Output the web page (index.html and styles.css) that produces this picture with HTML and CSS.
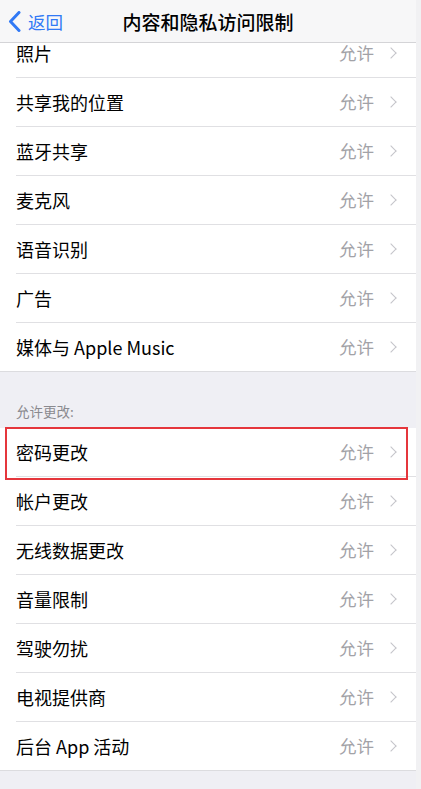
FILE: index.html
```html
<!DOCTYPE html>
<html lang="zh-CN">
<head>
<meta charset="utf-8">
<title>内容和隐私访问限制</title>
<link rel="stylesheet" href="styles.css">
</head>
<body>
<div class="app">
  <header class="topbar">
    <a class="back" href="#">
      <svg class="back-icon" width="13" height="21" viewBox="0 0 13 21" aria-hidden="true">
        <path d="M11 1.5 L2.5 10.5 L11 19.5" fill="none" stroke="currentColor" stroke-width="3" stroke-linecap="round" stroke-linejoin="round"/>
      </svg>
      <span>返回</span>
    </a>
    <h1 class="title">内容和隐私访问限制</h1>
  </header>

  <main class="page">
    <ul class="group">
      <li class="row"><span class="label">照片</span><span class="value">允许</span><i class="chev"></i></li>
      <li class="row"><span class="label">共享我的位置</span><span class="value">允许</span><i class="chev"></i></li>
      <li class="row"><span class="label">蓝牙共享</span><span class="value">允许</span><i class="chev"></i></li>
      <li class="row"><span class="label">麦克风</span><span class="value">允许</span><i class="chev"></i></li>
      <li class="row"><span class="label">语音识别</span><span class="value">允许</span><i class="chev"></i></li>
      <li class="row"><span class="label">广告</span><span class="value">允许</span><i class="chev"></i></li>
      <li class="row"><span class="label">媒体与 Apple Music</span><span class="value">允许</span><i class="chev"></i></li>
    </ul>

    <h2 class="section-title">允许更改:</h2>
    <ul class="group">
      <li class="row row-marked"><span class="label">密码更改</span><span class="value">允许</span><i class="chev"></i></li>
      <li class="row"><span class="label">帐户更改</span><span class="value">允许</span><i class="chev"></i></li>
      <li class="row"><span class="label">无线数据更改</span><span class="value">允许</span><i class="chev"></i></li>
      <li class="row"><span class="label">音量限制</span><span class="value">允许</span><i class="chev"></i></li>
      <li class="row"><span class="label">驾驶勿扰</span><span class="value">允许</span><i class="chev"></i></li>
      <li class="row"><span class="label">电视提供商</span><span class="value">允许</span><i class="chev"></i></li>
      <li class="row"><span class="label">后台 App 活动</span><span class="value">允许</span><i class="chev"></i></li>
    </ul>
  </main>
</div>
</body>
</html>
```

FILE: styles.css
```css
* {
  box-sizing: border-box;
}

html,
body {
  margin: 0;
  padding: 0;
  height: 100%;
}

body {
  background: #f1f1f3;
  font-family: "Noto Sans CJK SC", "Noto Sans", "Liberation Sans", sans-serif;
  color: #000;
  overflow: hidden;
}

.app {
  width: 416px;
  height: 789px;
  position: relative;
  background: #efeff4;
  overflow: hidden;
}

/* navigation bar floats over the scrolled list */
.topbar {
  position: absolute;
  top: 0;
  left: 0;
  right: 0;
  height: 43px;
  z-index: 2;
  background: #f7f7f8;
  border-bottom: 1px solid #d4d4d7;
  display: flex;
  align-items: center;
  justify-content: center;
}

.back {
  position: absolute;
  left: 8px;
  top: 0;
  height: 42px;
  display: flex;
  align-items: center;
  gap: 7px;
  color: #3179f5;
  text-decoration: none;
  font-size: 17.5px;
}

.back-icon {
  display: block;
}

.title {
  margin: 0;
  font-size: 19px;
  font-weight: 500;
  letter-spacing: 0;
}

/* list content, scrolled so the first row sits under the bar */
.page {
  padding-top: 29px;
}

.group {
  list-style: none;
  margin: 0;
  padding: 0;
  background: #fff;
  border-bottom: 1px solid #dcdcdf;
}

.row {
  position: relative;
  height: 49px;
  margin-left: 16px;
  padding-right: 19px;
  display: flex;
  align-items: center;
  border-bottom: 1px solid #e0e0e3;
}

.row:last-child {
  border-bottom: none;
  height: 48px;
}

.label {
  flex: 1;
  font-size: 18px;
  line-height: 1;
}

.value {
  font-size: 17.5px;
  color: #a2a2a7;
  line-height: 1;
  margin-right: 13px;
}

.chev {
  width: 8px;
  height: 8px;
  border-top: 1.8px solid #c4c4c9;
  border-right: 1.8px solid #c4c4c9;
  transform: rotate(45deg);
  margin-right: 2px;
}

.section-title {
  margin: 0;
  height: 56px;
  padding: 33px 0 0 16px;
  font-size: 13.5px;
  font-weight: 400;
  color: #8a8a8f;
  line-height: 1;
}

/* red highlight drawn around the marked row */
.row-marked::after {
  content: "";
  position: absolute;
  left: -11px;
  right: 8px;
  top: -1px;
  bottom: -4px;
  border: 2px solid #e5363c;
  pointer-events: none;
}
```
